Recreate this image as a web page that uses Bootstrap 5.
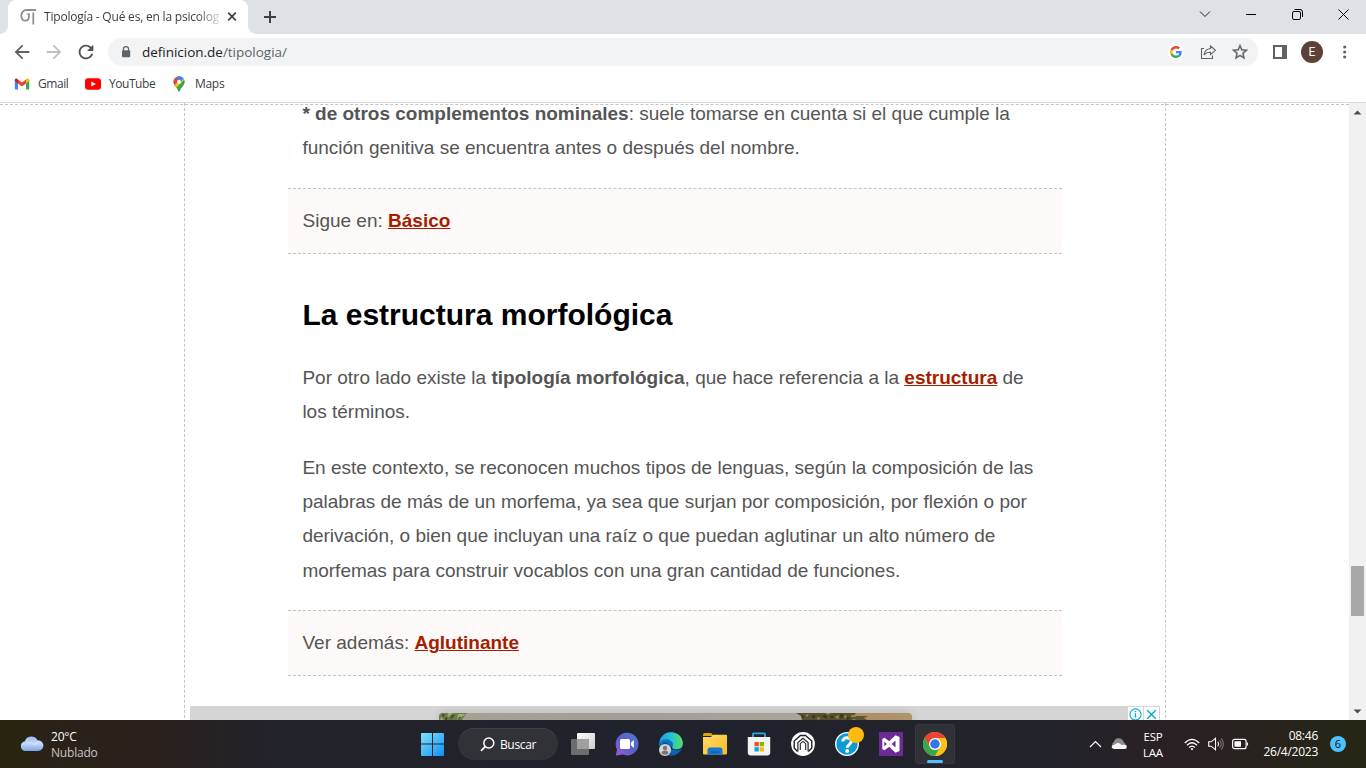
<!DOCTYPE html>
<html lang="es">
<head>
<meta charset="utf-8">
<meta name="viewport" content="width=device-width, initial-scale=1">
<title>Tipología - Qué es, en la psicología</title>
<link rel="stylesheet" href="https://cdn.jsdelivr.net/npm/bootstrap@5.3.0/dist/css/bootstrap.min.css">
<style>
  body { width: 1366px; height: 768px; font-family: "Open Sans", "Noto Sans", sans-serif; font-size: 12px; line-height: 16px; color: #3c4043; background: #fff; }
  svg { display: block; flex: none; }

  /* browser frame */
  .tabstrip { height: 34px; background: #dee1e6; }
  .tab-active { width: 240px; height: 34px; margin-left: 8px; background: #fff; border-radius: 8px 8px 0 0; padding: 0 10px 0 12px; }
  .tab-active::before, .tab-active::after { content: ""; position: absolute; bottom: 0; width: 8px; height: 8px; }
  .tab-active::before { left: -8px; background: radial-gradient(circle at 0 0, #dee1e6 7.5px, #fff 8px); }
  .tab-active::after { right: -8px; background: radial-gradient(circle at 100% 0, #dee1e6 7.5px, #fff 8px); }
  .tab-title { width: 179px; margin-left: 8px; letter-spacing: -.2px; -webkit-mask-image: linear-gradient(90deg, #000 153px, transparent 180px); mask-image: linear-gradient(90deg, #000 153px, transparent 180px); }
  .winbtn { width: 46px; height: 28px; }
  .toolbar { height: 36px; padding: 0 11px 0 11px; }
  .omnibox { height: 28px; width: 1150px; margin-left: 11px; border-radius: 14px; background: #f1f3f4; padding: 0 6px 0 11px; }
  .url { font-size: 13.5px; letter-spacing: -.02px; color: #202124; margin-left: 11px; }
  .url span { color: #5f6368; }
  .avatar { width: 22px; height: 22px; background: #5d4037; font-size: 12px; font-family: Roboto, sans-serif; }
  .bookmarks { height: 33px; padding: 0 14px 4px; border-bottom: 1px solid #dadce0; }
  .bookmarks span { letter-spacing: -.45px; }

  /* page */
  .viewport { height: 617px; }
  .page-frame { height: 640px; margin-top: 1px; border-top: 1px dashed #c4c4c4; }
  .page-col { width: 982px; margin-left: 184px; margin-top: -2px; height: 640px; border: 1px dashed #c4c4c4; border-width: 0 1px; }
  .article { width: 774px; margin-left: 103px; padding-top: 1px; font: 19px/34.2px "Liberation Sans", Arial, sans-serif; color: #555; white-space: nowrap; }
  .article p { margin: 0 14.4px 22px; }
  .article .first-par { margin-top: -7px; margin-bottom: 22.8px; }
  .article .last-par { margin-bottom: 22.2px; }
  .article h2 { font: bold 30px/38px "Liberation Sans", Arial, sans-serif; color: #000; margin: 42px 14.4px 26.4px; }
  .article a { color: #a61c00; font-weight: 700; text-decoration: underline; text-underline-offset: 1px; text-decoration-thickness: 1px; }
  .see-also { background: #fdf9f8; border: 1px dashed #c4c4c4; border-width: 1px 0; padding: 15px 14.5px; height: 66px; line-height: 34px; }
  .ad { height: 20px; margin: 30px 5px 0; background: #d5d5d5; }
  .ad-photo { width: 473px; height: 14px; margin: 7px 0 0 249px; border-radius: 4px 4px 0 0; overflow: hidden; box-shadow: 0 0 10px rgba(0,0,0,.14); }
  .ad-choice { width: 15px; height: 16px; background: #fff; top: 1px; }
  .scroll { width: 17px; background: #f1f1f1; }
  .scroll .thumb { width: 13px; height: 50px; margin: 463px auto 0 2px; background: #a8a8a8; }

  /* taskbar */
  .taskbar { height: 48px; color: #fff; background: linear-gradient(90deg, #28240f 0, #2a2119 60px, #2a201b 140px, #22222a 270px, #20222b 700px, #23232b 1060px, #2a2024 1180px, #27231c 1280px, #262615 1366px); }
  .weather { width: 412px; padding: 2px 0 0 20px; }
  .appbtn { width: 40px; height: 40px; margin-right: 4px; border-radius: 4px; }
  .appbtn.active { background: #303037; box-shadow: inset 0 0 0 1px #38383f; }
  .search { width: 100px; height: 32px; margin: 0 5px 0 2px; border-radius: 16px; background: #313138; box-shadow: inset 0 1px 0 #3d3d44; }
  .running { width: 16px; height: 3px; left: 12px; bottom: 1px; border-radius: 2px; background: #4cc2ff; }
  .taskbar .tight { letter-spacing: -.25px; }
  .notif { width: 16px; height: 16px; background: #4cc2ff; color: #111; font-size: 11px; margin-left: 12px; }
</style>
</head>
<body class="overflow-hidden d-flex flex-column m-0">

<header>
  <div class="tabstrip d-flex">
    <div class="tab-active position-relative d-flex align-items-center">
      <svg width="16" height="18" viewBox="0 0 16 18" fill="none" stroke="#8f8f8f" stroke-width="1.8"><path d="M16 2H6.500C3.500 2 1.300 4.200 1.300 7.500S3.200 12.600 5.500 12.600 9 11 9 8V5.500M13.300 4.500V16.500"/><path d="M9 6H6.500" stroke-width="1"/></svg>
      <div class="tab-title text-nowrap">Tipología - Qué es, en la psicolog</div>
      <svg class="ms-1" width="10" height="10" viewBox="0 0 10 10" stroke="#3c4043" stroke-width="1.7"><path d="M1.200 .7l7.600 7.600M8.800 .7L1.200 8.300"/></svg>
    </div>
    <svg style="margin:10px 0 0 15px" width="14" height="14" viewBox="0 0 14 14" stroke="#3c4043" stroke-width="2"><path d="M7 1v12M1 7h12"/></svg>
    <div class="d-flex ms-auto">
      <div class="winbtn d-flex align-items-center justify-content-center"><svg width="12" height="8" viewBox="0 0 12 8" fill="none" stroke="#222" stroke-width="1"><path d="M1 1.500l5 5 5-5"/></svg></div>
      <div class="winbtn d-flex align-items-center justify-content-center"><svg width="10" height="10" viewBox="0 0 10 10" stroke="#000"><path d="M0 5.500h10"/></svg></div>
      <div class="winbtn d-flex align-items-center justify-content-center"><svg width="11" height="11" viewBox="0 0 11 11" fill="none" stroke="#000"><rect x=".5" y="2.500" width="8" height="8" rx="1.500"/><path d="M2.500 .5h5.500q2.500 0 2.500 2.500V8"/></svg></div>
      <div class="winbtn d-flex align-items-center justify-content-center"><svg width="11" height="11" viewBox="0 0 11 11" stroke="#000"><path d="M.5 .5l10 10M10.500 .5l-10 10"/></svg></div>
    </div>
  </div>

  <nav class="toolbar d-flex align-items-center">
    <svg width="22" height="22" viewBox="0 0 24 24" fill="#5f6368"><path d="M20 11H7.830l5.590-5.590L12 4l-8 8 8 8 1.410-1.410L7.830 13H20z"/></svg>
    <svg style="margin:0 10px" width="22" height="22" viewBox="0 0 24 24" fill="#bdc1c6"><path d="M12 4l-1.410 1.410L16.170 11H4v2h12.170l-5.580 5.590L12 20l8-8z"/></svg>
    <svg width="22" height="22" viewBox="0 0 24 24" fill="#4f5357"><path d="M17.650 6.350C16.200 4.900 14.210 4 12 4c-4.420 0-7.990 3.580-7.990 8s3.570 8 7.990 8c3.730 0 6.840-2.550 7.730-6h-2.080c-.82 2.330-3.040 4-5.650 4-3.310 0-6-2.690-6-6s2.690-6 6-6c1.660 0 3.140.69 4.220 1.780L13 11h7V4z"/></svg>
    <div class="omnibox d-flex align-items-center">
      <svg style="margin-left:2px" width="10" height="12" viewBox="0 0 10 12"><path d="M2.400 5V3.200a2.600 2.600 0 015.200 0V5" fill="none" stroke="#5f6368" stroke-width="1.200"/><rect x="1" y="4.300" width="8.200" height="7" rx="1" fill="#5f6368"/></svg>
      <div class="url text-nowrap">definicion.de<span>/tipologia/</span></div>
      <div class="ms-auto d-flex align-items-center">
        <div class="bg-white rounded-circle d-flex align-items-center justify-content-center" style="width:16px;height:16px"><svg width="12" height="12" viewBox="0 0 48 48"><path fill="#EA4335" d="M24 9.500c3.540 0 6.710 1.220 9.210 3.600l6.850-6.850C35.900 2.380 30.470 0 24 0 14.620 0 6.510 5.380 2.560 13.220l7.980 6.190C12.430 13.720 17.740 9.500 24 9.500z"/><path fill="#4285F4" d="M46.980 24.550c0-1.570-.15-3.090-.38-4.550H24v9.020h12.940c-.58 2.960-2.260 5.480-4.780 7.180l7.730 6c4.510-4.180 7.090-10.360 7.090-17.650z"/><path fill="#FBBC05" d="M10.530 28.590c-.48-1.450-.76-2.990-.76-4.590s.27-3.140.76-4.590l-7.980-6.190C.92 16.460 0 20.120 0 24c0 3.880.92 7.540 2.560 10.780z"/><path fill="#34A853" d="M24 48c6.480 0 11.930-2.130 15.890-5.810l-7.730-6c-2.150 1.450-4.920 2.300-8.160 2.300-6.260 0-11.570-4.220-13.470-9.910l-7.980 6.190C6.510 42.620 14.620 48 24 48z"/></svg></div>
        <svg style="margin:0 16px" width="16" height="16" viewBox="0 0 16 16" fill="none" stroke="#5f6368" stroke-width="1.100"><path d="M4 4.500H1.500v10h11V11.500"/><path d="M10.500 2l5 4.300-5 4.200V8.300C7.500 8.200 5.500 9 4 11c.5-3.500 3-6.200 6.500-6.500z"/></svg>
        <svg width="16" height="16" viewBox="2 2 20 20" fill="#5f6368" stroke="#5f6368" stroke-width=".3"><path d="M22 9.240l-7.190-.62L12 2 9.190 8.630 2 9.240l5.460 4.730L5.820 21 12 17.270 18.180 21l-1.630-7.030zM12 15.400l-3.760 2.270 1-4.280-3.320-2.880 4.380-.38L12 6.100l1.710 4.040 4.380.38-3.320 2.880 1 4.280z"/></svg>
      </div>
      <span style="width:4px"></span>
    </div>
    <svg style="margin-left:15px" width="14" height="14" viewBox="0 0 14 14"><path fill="#5f6368" fill-rule="evenodd" d="M0 0h14v14H0zM2 2v10h7V2z"/></svg>
    <div class="avatar rounded-circle text-white d-flex align-items-center justify-content-center" style="margin-left:14px">E</div>
    <svg style="margin-left:20px" width="4" height="14" viewBox="0 0 4 14" fill="#5f6368"><circle cx="1.700" cy="2" r="1.600"/><circle cx="1.700" cy="7" r="1.600"/><circle cx="1.700" cy="12" r="1.600"/></svg>
  </nav>

  <nav class="bookmarks d-flex align-items-center">
    <svg width="16" height="12" viewBox="0 0 16 12"><path fill="#4285F4" d="M.8 2v8.600q0 .9.900.9H4V5z"/><path fill="#34A853" d="M15.200 2v8.600q0 .9-.9.900H12V5z"/><path fill="#FBBC04" d="M12 1.500V5.500l3.200-2.400V2c0-1.500-1.500-2-2.500-1.200z"/><path fill="#C5221F" d="M.8 2v1.100L4 5.500V1.500l-.7-.6C2.200 0 .8.600.8 2z"/><path fill="#EA4335" d="M4 5.500v-4l4 3 4-3v4l-4 3z"/></svg>
    <span style="margin-left:8px;width:47px">Gmail</span>
    <svg width="16" height="12" viewBox="0 0 16 12"><rect width="16" height="11.500" y=".2" rx="3" fill="#f00"/><path fill="#fff" d="M6.300 3.500v5L10.800 6z"/></svg>
    <span style="margin-left:8px;width:64px">YouTube</span>
    <svg width="12" height="16" viewBox="0 0 12 16"><defs><clipPath id="pin"><path d="M6 .3A5.500 5.500 0 0 0 .5 5.800c0 4 3.600 5 4.700 9 .2.900 1.400.9 1.600 0 1.100-4 4.700-5 4.700-9A5.500 5.500 0 0 0 6 .3z"/></clipPath></defs><g clip-path="url(#pin)"><path fill="#34A853" d="M0 0h12v16H0z"/><path fill="#FBBC04" d="M0 10.500L10 -.5 12 5 4 14z"/><path fill="#4285F4" d="M4 0h8v1L1.500 12.500 0 9z"/><path fill="#4285F4" d="M6 0h6v4L9 2 6 6z"/><path fill="#EA4335" d="M0 0h2l3.500 4L0 11z"/><path fill="#FBBC04" d="M1 9.500L4.500 6 8 7.500 3 13z"/><path fill="#34A853" d="M12 3v13H4.500L3 12z"/></g><circle cx="6" cy="5.800" r="2" fill="#fff"/></svg>
    <span style="margin-left:10px;letter-spacing:-.3px">Maps</span>
  </nav>
</header>

<main class="viewport d-flex overflow-hidden">
  <div class="flex-grow-1 overflow-hidden">
    <div class="page-frame">
      <div class="page-col">
        <article class="article">
          <p class="first-par"><strong>* de otros complementos nominales</strong>: suele tomarse en cuenta si el que cumple la<br>función genitiva se encuentra antes o después del nombre.</p>
          <div class="see-also">Sigue en: <a href="#">Básico</a></div>
          <h2>La estructura morfológica</h2>
          <p>Por otro lado existe la <strong>tipología morfológica</strong>, que hace referencia a la <a href="#">estructura</a> de<br>los términos.</p>
          <p class="last-par">En este contexto, se reconocen muchos tipos de lenguas, según la composición de las<br>palabras de más de un morfema, ya sea que surjan por composición, por flexión o por<br>derivación, o bien que incluyan una raíz o que puedan aglutinar un alto número de<br>morfemas para construir vocablos con una gran cantidad de funciones.</p>
          <div class="see-also">Ver además: <a href="#">Aglutinante</a></div>
        </article>
        <div class="ad position-relative d-flex">
          <div class="ad-photo">
            <svg width="473" height="14" viewBox="0 0 473 14"><defs><linearGradient id="wall"><stop offset="0" stop-color="#a5a294"/><stop offset=".4" stop-color="#a39f98"/><stop offset=".77" stop-color="#a8a49c"/><stop offset=".8" stop-color="#a98a62"/><stop offset="1" stop-color="#b0946c"/></linearGradient></defs><path fill="url(#wall)" d="M0 0h473v14H0z"/><path fill="#6d7a4a" d="M0 0h28l-3 4-3 4H0z"/><path fill="#9dad6c" d="M9 0h5l-6 5zM19 1h8l-9 6zM2 4l3 3H1z"/><path fill="#37431f" d="M3 1l3 1-2 2zM13 2h3l-5 5zM6 5l3-1-2 4zM20 4l2 0-3 3z"/><path fill="#57502f" d="M357 0h60l-3 3 5 2-6 2h-50l-1-4z"/><path fill="#5c552f" d="M417 3h12l-4 2 3 2h-12z"/><path fill="#9b8350" d="M366 2l4-1-2 3zM378 4l4 1-3 2zM386 0l3 2 3-2zM396 4l4-2-1 4zM405 2l3 1-2 3zM412 2h5l-4 3z"/><path fill="#32351a" d="M362 2l3 1-1 3zM373 2l4 1-3 3zM383 3l4-1 1 4zM391 3l4 0-2 3zM401 1l4 1-3 4zM408 4l4 1-4 2z"/></svg>
          </div>
          <div class="ad-choice position-absolute d-flex justify-content-center" style="right:17px"><svg width="13" height="14" viewBox="0 0 13 14"><circle cx="6.500" cy="7.500" r="5.600" fill="none" stroke="#00aecd" stroke-width="1.100"/><path d="M6.500 6.200v4.300M6.500 4v1.300" stroke="#00aecd" stroke-width="1.400"/></svg></div>
          <div class="ad-choice position-absolute d-flex justify-content-center" style="right:1px"><svg width="13" height="14" viewBox="0 0 13 14" stroke="#00aecd" stroke-width="1.400"><path d="M2.200 3.200l8.600 8.600M10.800 3.200l-8.600 8.600"/></svg></div>
        </div>
      </div>
    </div>
  </div>
  <div class="scroll d-flex flex-column position-relative">
    <svg class="position-absolute" style="left:4px;top:7px" width="9" height="5" viewBox="0 0 9 5" fill="#505050"><path d="M.5 4.500h8L4.500 .5z"/></svg>
    <div class="thumb"></div>
    <svg class="position-absolute" style="left:4px;bottom:6px" width="9" height="5" viewBox="0 0 9 5" fill="#505050"><path d="M.5 .5h8L4.500 4.500z"/></svg>
  </div>
</main>

<footer class="taskbar d-flex align-items-center">
  <div class="weather d-flex align-items-center flex-shrink-0">
    <svg style="margin-top:-2px" width="24" height="18" viewBox="0 0 24 18"><defs><linearGradient id="cl" x2="0" y2="1"><stop stop-color="#9dbdf0"/><stop offset=".5" stop-color="#c4d8fa"/><stop offset="1" stop-color="#7ea4e8"/></linearGradient></defs><path fill="url(#cl)" d="M5 16a5 5 0 0 1-.2-9.800A7 7 0 0 1 17.500 5.200 5.400 5.400 0 0 1 18.500 16z"/><path fill="#dce8fc" opacity=".6" d="M5 7c4-1 7 0 9 2 2-3 5-3 7-1-3-1-5 1-6 3C12 8 8 7 5 7z"/></svg>
    <div style="margin-left:7px;letter-spacing:-.2px"><div>20°C</div><div style="color:#c8c4c2">Nublado</div></div>
  </div>

  <div class="appbtn d-flex align-items-center justify-content-center"><svg width="24" height="24" viewBox="0 0 24 24"><defs><linearGradient id="win" x2="1" y2="1"><stop stop-color="#7ee3ff"/><stop offset="1" stop-color="#1090f5"/></linearGradient></defs><path fill="url(#win)" d="M2 1H12v10.500H1V2q0-1 1-1zM13 1h10q1 0 1 1v9.500H13zM1 12.500H12V24H2q-1 0-1-1zM13 12.500h11V23q0 1-1 1H13z"/></svg></div>
  <div class="search d-flex align-items-center justify-content-center"><svg width="15" height="15" viewBox="0 0 15 15" fill="none" stroke="#fff" stroke-width="1.500"><circle cx="8.800" cy="6" r="5"/><path d="M5.200 9.600L1 13.800" stroke-width="1.800"/></svg><span style="margin:2px 0 0 5px;letter-spacing:-.35px">Buscar</span></div>

  <div class="appbtn d-flex align-items-center justify-content-center"><svg width="24" height="24" viewBox="0 0 24 24"><defs><linearGradient id="tv" x2="1" y2="1"><stop stop-color="#fff"/><stop offset="1" stop-color="#ccc"/></linearGradient></defs><rect x="6" y="1" width="18" height="16" rx="1" fill="url(#tv)"/><rect y="7" width="18" height="16" rx="1" fill="#6d6d6f"/><path fill="#a0a0a0" d="M6 7h11q1 0 1 1v9H6z"/></svg></div>
  <div class="appbtn d-flex align-items-center justify-content-center"><svg width="24" height="24" viewBox="0 0 24 24"><defs><linearGradient id="chat" x1="1" x2="0" y2="1"><stop stop-color="#4b7fcf"/><stop offset=".5" stop-color="#5b5fc7"/><stop offset="1" stop-color="#9a5ad0"/></linearGradient></defs><path fill="url(#chat)" d="M12 .8a11.300 11.300 0 1 1-4 21.800L.8 23.500 2 17.500A11.300 11.300 0 0 1 12 .8z"/><rect x="5" y="7" width="10" height="10" rx="1.500" fill="#fff"/><path fill="#fff" d="M15.800 10.800L18.800 8v8l-3-2.800z"/></svg></div>
  <div class="appbtn d-flex align-items-center justify-content-center"><svg width="26" height="26" viewBox="0 0 26 26"><defs><linearGradient id="e1" x2="1"><stop stop-color="#1f9fe0"/><stop offset=".5" stop-color="#24c2d5"/><stop offset="1" stop-color="#5edc5a"/></linearGradient><linearGradient id="e2" x2="1" y2="1"><stop stop-color="#1380d8"/><stop offset="1" stop-color="#0c59a4"/></linearGradient></defs><circle cx="13" cy="13" r="11.800" fill="url(#e2)"/><path fill="url(#e1)" d="M1.500 12C2 5.500 7 1.200 13 1.200c7 0 11.800 5 11.800 11 0 4-3 6.300-6.500 6.300-3 0-5-1.300-4-2.700 1-1.500 1-3.800-1-5.500C9.500 7 3.500 8 1.500 12z"/><path fill="#20222b" d="M14.300 15.800c-.8 1.400 1 2.700 4 2.700 2.800 0 4.400-.8 5.800-2.200-1 3-3.100 2.900-6.100 2.900-4 0-7-2-3.700-3.400z"/><path fill="#0b4f94" d="M10 12c-2 5 0 9 5 11.800-7 1.500-12-3.800-12-8.300C3 12 7 10 10 12z"/><circle cx="7" cy="19" r="6" fill="#d4d4d4"/><circle cx="7" cy="17" r="2.200" fill="#777"/><path fill="#777" d="M3.500 22.500q0-2.900 3.500-2.900t3.500 2.900Q7 25 3.500 22.500z"/></svg></div>
  <div class="appbtn d-flex align-items-center justify-content-center"><svg width="26" height="24" viewBox="0 0 26 24"><defs><linearGradient id="fo" x2="1" y2="1"><stop stop-color="#ffdb6b"/><stop offset="1" stop-color="#fbbc22"/></linearGradient></defs><path fill="#d9a010" d="M1 2.500q0-1.500 1.500-1.500h6q1 0 1.500.8L11 4H1z"/><path fill="url(#fo)" d="M1 5h8l2-2.200h13q1 0 1 1V21.500q0 1-1 1H2q-1 0-1-1z"/><path fill="#1478d0" d="M5.500 22.500V18q0-2.500 2.500-2.500h10q2.500 0 2.500 2.500v4.500z"/><path fill="#0a5aa8" d="M9 19.500h8v1.200H9z"/></svg></div>
  <div class="appbtn d-flex align-items-center justify-content-center"><svg width="24" height="26" viewBox="0 0 24 26"><path fill="none" stroke="#29a8ee" stroke-width="1.800" d="M6 8V3.200q0-.9.900-.9h10.200q.9 0 .9.900V8"/><path fill="#f3f3f3" d="M.8 6h22.400v15.500q0 3-3 3H3.800q-3 0-3-3z"/><path fill="#f25022" d="M7.500 11h4.300v4.300H7.500z"/><path fill="#7fba00" d="M12.700 11H17v4.300h-4.300z"/><path fill="#00a4ef" d="M7.500 16.200h4.300v4.300H7.500z"/><path fill="#ffb900" d="M12.700 16.200H17v4.300h-4.300z"/></svg></div>
  <div class="appbtn d-flex align-items-center justify-content-center"><svg width="24" height="24" viewBox="0 0 24 24"><circle cx="12" cy="12" r="11.900" fill="#fff"/><g fill="none" stroke="#20222b"><path d="M6.500 19.500L3.200 16V9l6.300-5.500h5L20.800 9v7l-3.300 3.500" stroke-width="1.400"/><path d="M6.900 19.500V10.500L12 6.200l5.100 4.300v9" stroke-width="1.200"/><path d="M9.300 18V11.700L12 9.400" stroke-width="1.100"/><path d="M14.700 18V11.700L12 9.400" stroke-width="1.100"/></g></svg></div>
  <div class="appbtn d-flex align-items-center justify-content-center"><svg style="overflow:visible" width="24" height="24" viewBox="0 0 24 24"><circle cx="12" cy="12" r="11.300" fill="#0d9bd8" stroke="#fff" stroke-width="1.300"/><path fill="none" stroke="#fff" stroke-width="3" d="M7.800 9.500c0-5 8.500-5 8.500-.3 0 3-4 3.200-4 6.600"/><circle cx="12.200" cy="19" r="1.900" fill="#fff"/><circle cx="21" cy="3" r="8" fill="#ffb90f"/></svg></div>
  <div class="appbtn d-flex align-items-center justify-content-center"><svg width="24" height="24" viewBox="0 0 24 24"><path fill="#6b2a94" d="M0 0h24v24H0z"/><path fill="#fff" fill-rule="evenodd" d="M16.500 3.200L20.500 5v14l-4 1.800-6.300-6L5.500 18.300 3.300 17V7l2.200-1.300 4.700 3.600zM16.500 8.500L12.700 12l3.800 3.500zM5.300 9.500v5L7.800 12z"/></svg></div>
  <div class="appbtn active position-relative d-flex align-items-center justify-content-center"><svg width="24" height="24" viewBox="0 0 48 48"><circle cx="24" cy="24" r="24" fill="#fbc116"/><path fill="#ea4335" d="M3.200 12A24 24 0 0 1 44.800 12H24L13.600 30z"/><path fill="#34a853" d="M3.200 12A24 24 0 0 0 24 48L34.400 30A12 12 0 0 1 13.600 30z"/><path fill="#fbc116" d="M24 48A24 24 0 0 0 44.800 12H24A12 12 0 0 1 34.400 30z"/><circle cx="24" cy="24" r="12" fill="#fff"/><circle cx="24" cy="24" r="9.500" fill="#2f78ea"/></svg><div class="running position-absolute"></div></div>

  <div class="d-flex align-items-center ms-auto" style="padding-right:20px">
    <svg width="13" height="8" viewBox="0 0 13 8" fill="none" stroke="#fff" stroke-width="1.200"><path d="M1 7l5.500-5.500L12 7"/></svg>
    <svg style="margin-left:9px" width="17" height="12" viewBox="0 0 17 12"><path fill="#8d8b8c" d="M3 9.500A3 3 0 0 1 2.800 4 5 5 0 0 1 12.300 3.500L16 8z"/><path fill="#f5f5f5" d="M.5 9Q1 6.800 3.500 6.700q1.500-2.200 4-1.700 2 .4 3 2 2.500-1 5 .8Q16.500 11 13.500 11h-10Q1 11 .5 9z"/></svg>
    <div class="text-center" style="width:40px;margin:1px 0 0 5px;font-size:11.5px;letter-spacing:-.25px"><div>ESP</div><div>LAA</div></div>
    <svg style="margin-left:11px" width="16" height="13" viewBox="0 0 16 13" fill="none" stroke="#fff" stroke-width="1.300"><path d="M.8 5Q8-2.200 15.200 5M3 7.300q5-5 10 0M5.200 9.500q2.800-2.800 5.600 0"/><circle cx="8" cy="11" r="1.100" fill="#fff" stroke="none"/></svg>
    <svg style="margin-left:8px" width="16" height="14" viewBox="0 0 16 14" fill="none" stroke="#fff" stroke-width="1.100"><path d="M.7 4.800h2.600L7.500 1.200v11.600L3.300 9.200H.7z"/><path d="M9.800 4.800q1.600 2.200 0 4.400"/><path stroke="#777" d="M11.600 3q3 4 0 8M13.300 1.300q4 5.700 0 11.400"/></svg>
    <svg style="margin-left:8px" width="17" height="12" viewBox="0 0 17 12"><rect x=".6" y="1.300" width="13.500" height="9.400" rx="2" fill="none" stroke="#fff" stroke-width="1.200"/><path fill="#fff" d="M2.500 3.200H9v5.600H2.500zM15 4.300q1.200 0 1.200 1.700T15 7.700z"/></svg>
    <div class="text-end tight" style="width:69px"><div>08:46</div><div>26/4/2023</div></div>
    <div class="notif rounded-circle d-flex align-items-center justify-content-center">6</div>
  </div>
</footer>

<script src="https://cdn.jsdelivr.net/npm/bootstrap@5.3.0/dist/js/bootstrap.bundle.min.js"></script>
</body>
</html>
